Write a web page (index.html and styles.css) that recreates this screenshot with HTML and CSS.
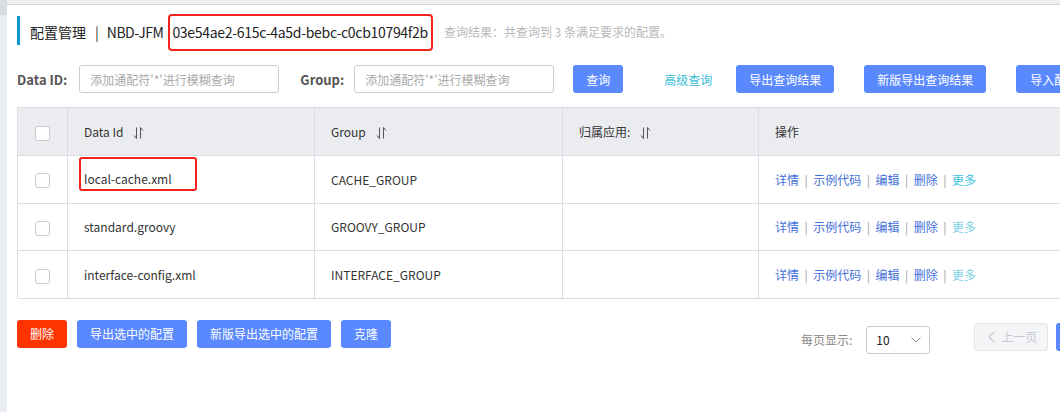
FILE: index.html
```html
<!DOCTYPE html>
<html lang="zh">
<head>
<meta charset="utf-8">
<title>配置管理</title>
<link rel="stylesheet" href="styles.css">
</head>
<body>
<div class="shell">
  <aside class="side"><div class="side-top"></div></aside>
  <div class="page">
    <div class="topline"></div>
    <main class="main">
      <div class="title-row">
        <div class="title-bar"></div>
        <span class="title">配置管理</span>
        <span class="sep">|</span>
        <span class="title latin">NBD-JFM</span>
        <span class="ns-box">03e54ae2-615c-4a5d-bebc-c0cb10794f2b</span>
        <span class="result">查询结果：共查询到 3 条满足要求的配置。</span>
      </div>

      <div class="search-row">
        <label class="lbl">Data ID:</label>
        <input class="inp" type="text" placeholder="添加通配符'*'进行模糊查询">
        <label class="lbl lbl-group">Group:</label>
        <input class="inp" type="text" placeholder="添加通配符'*'进行模糊查询">
        <button class="btn btn-query">查询</button>
        <a class="adv">高级查询</a>
        <button class="btn btn-export">导出查询结果</button>
        <button class="btn btn-export2">新版导出查询结果</button>
        <button class="btn btn-import">导入配置</button>
      </div>

      <table class="grid">
        <colgroup>
          <col class="c-chk"><col class="c-id"><col class="c-group"><col class="c-app"><col class="c-op">
        </colgroup>
        <thead>
          <tr>
            <th class="chk"><span class="cb"></span></th>
            <th>Data Id<svg class="sort" viewBox="0 0 11 12" width="11" height="12"><path d="M3.5 0.5V11.5L1 8.5M7.5 11.5V0.5L10 3.5" fill="none" stroke="#555" stroke-width="1"/></svg></th>
            <th>Group<svg class="sort" viewBox="0 0 11 12" width="11" height="12"><path d="M3.5 0.5V11.5L1 8.5M7.5 11.5V0.5L10 3.5" fill="none" stroke="#555" stroke-width="1"/></svg></th>
            <th>归属应用:<svg class="sort" viewBox="0 0 11 12" width="11" height="12"><path d="M3.5 0.5V11.5L1 8.5M7.5 11.5V0.5L10 3.5" fill="none" stroke="#555" stroke-width="1"/></svg></th>
            <th>操作</th>
          </tr>
        </thead>
        <tbody>
          <tr>
            <td class="chk"><span class="cb"></span></td>
            <td><span class="hl-box">local-cache.xml</span></td>
            <td>CACHE_GROUP</td>
            <td></td>
            <td class="ops"><a>详情</a><i>|</i><a>示例代码</a><i>|</i><a>编辑</a><i>|</i><a>删除</a><i>|</i><a class="more more-hot">更多</a></td>
          </tr>
          <tr>
            <td class="chk"><span class="cb"></span></td>
            <td>standard.groovy</td>
            <td>GROOVY_GROUP</td>
            <td></td>
            <td class="ops"><a>详情</a><i>|</i><a>示例代码</a><i>|</i><a>编辑</a><i>|</i><a>删除</a><i>|</i><a class="more">更多</a></td>
          </tr>
          <tr>
            <td class="chk"><span class="cb"></span></td>
            <td>interface-config.xml</td>
            <td>INTERFACE_GROUP</td>
            <td></td>
            <td class="ops"><a>详情</a><i>|</i><a>示例代码</a><i>|</i><a>编辑</a><i>|</i><a>删除</a><i>|</i><a class="more">更多</a></td>
          </tr>
        </tbody>
      </table>

      <div class="foot-row">
        <div class="foot-left">
          <button class="btn btn-danger">删除</button>
          <button class="btn btn-sel">导出选中的配置</button>
          <button class="btn btn-sel2">新版导出选中的配置</button>
          <button class="btn btn-clone">克隆</button>
        </div>
        <div class="pager">
          <span class="per">每页显示:</span>
          <div class="select"><span>10</span><svg viewBox="0 0 10 6" width="10" height="6"><path d="M0.5 0.5L5 5.2L9.5 0.5" fill="none" stroke="#888" stroke-width="1"/></svg></div>
          <button class="pbtn prev"><svg viewBox="0 0 7 12" width="7" height="12"><path d="M6.5 0.5L1 6L6.5 11.5" fill="none" stroke="#c8cbd2" stroke-width="1.2"/></svg>上一页</button>
          <button class="btn pnext">下一页</button>
        </div>
      </div>
    </main>
  </div>
</div>
</body>
</html>
```

FILE: styles.css
```css
html, body {
  margin: 0;
  padding: 0;
  background: #ffffff;
  overflow: hidden;
  width: 1060px;
  height: 412px;
}
body {
  font-family: "Noto Sans CJK SC", "Noto Sans", sans-serif;
  color: #333;
  font-size: 12px;
}
.shell {
  display: flex;
  width: 1300px;
  height: 412px;
}
.side {
  width: 7px;
  flex: none;
  background: #e9ecf1;
}
.side-top {
  height: 15px;
  background: #d8dce3;
}
.page {
  flex: 1;
  display: flex;
  flex-direction: column;
}
.topline {
  height: 4px;
  background: #efefef;
  border-bottom: 1px solid #d2d2d2;
}
.main {
  padding: 8px 0 0 10px;
}
.title-row {
  display: flex;
  align-items: center;
  height: 37px;
  font-size: 14px;
}
.title-bar {
  width: 3px;
  height: 29px;
  background: #0f97d3;
  margin-right: 10px;
  margin-top: -3px;
}
.title { color: #222; }
.latin { letter-spacing: -0.5px; }
.sep {
  margin: 0 8px 0 9px;
  color: #333;
}
.ns-box {
  margin-left: 5px;
  border: 2px solid #f2231c;
  border-radius: 4px;
  padding: 0 3px 0 2px;
  height: 33px;
  line-height: 33px;
  color: #222;
  margin-top: 2px;
  letter-spacing: -0.3px;
}
.result {
  margin-left: 11px;
  color: #b8b8b8;
  font-size: 12px;
}
.search-row {
  display: flex;
  align-items: center;
  height: 28px;
  margin-top: 15px;
}
.lbl {
  font-weight: bold;
  color: #555;
  font-size: 13px;
  margin-right: 12px;
}
.lbl-group { margin-left: 21px; margin-right: 10px; }
.inp {
  box-sizing: border-box;
  width: 200px;
  height: 28px;
  border: 1px solid #c9ccd2;
  border-radius: 3px;
  padding: 0 10px;
  font-family: inherit;
  font-size: 12px;
  outline: none;
}
.inp::placeholder { color: #aaaaaa; }
.btn {
  height: 28px;
  border: none;
  border-radius: 3px;
  background: #5a89ff;
  color: #fff;
  font-family: inherit;
  font-size: 12px;
  padding: 0;
  flex: none;
}
.btn-query { margin-left: 19px; width: 50px; }
.adv {
  margin-left: 41px;
  color: #39bdd6;
  font-size: 12px;
}
.btn-export { margin-left: 24px; width: 98px; }
.btn-export2 { margin-left: 30px; width: 122px; }
.btn-import { margin-left: 30px; padding: 0 14px; }

.grid {
  margin-top: 14px;
  border-collapse: collapse;
  table-layout: fixed;
  width: 1150px;
}
.c-chk { width: 50px; }
.c-id { width: 247px; }
.c-group { width: 248px; }
.c-app { width: 196px; }
.grid th, .grid td {
  border: 1px solid #dcdde2;
  text-align: left;
  padding: 0 0 0 16px;
  font-weight: normal;
  font-size: 12px;
  color: #333;
  white-space: nowrap;
}
.grid th {
  background: #ebecf0;
  height: 47px;
}
.grid td { height: 46.6px; }
.grid .chk { padding: 0; text-align: center; }
.cb {
  display: inline-block;
  width: 13px;
  height: 13px;
  border: 1px solid #c8cad0;
  border-radius: 3px;
  background: #fff;
  vertical-align: middle;
}
.sort {
  margin-left: 10px;
  vertical-align: -2px;
}
.hl-box {
  display: inline-block;
  margin: -14px 0 -3px -5px;
  border: 2px solid #f2231c;
  border-radius: 3px;
  width: 111px;
  height: 20px;
  line-height: 20px;
  padding: 10px 0 0 3px;
  box-sizing: content-box;
}
.ops a { color: #3f6fd8; }
.ops i {
  font-style: normal;
  color: #9aa0aa;
  margin: 0 5.5px;
}
.ops .more { color: #7fcfe3; }
.ops .more-hot { color: #3cc3de; }

.foot-row {
  display: flex;
  align-items: flex-start;
  margin-top: 21px;
}
.foot-left {
  display: flex;
  gap: 10px;
}
.btn-danger { background: #ff3300; width: 50px; }
.btn-sel { width: 110px; }
.btn-sel2 { width: 134px; }
.btn-clone { width: 50px; }
.pager {
  display: flex;
  align-items: center;
  margin-left: 410px;
}
.per {
  color: #888;
  font-size: 12px;
  margin-right: 14px;
  margin-top: 6px;
}
.select {
  box-sizing: border-box;
  width: 64px;
  height: 28px;
  margin-top: 6px;
  border: 1px solid #c8cad0;
  border-radius: 3px;
  display: flex;
  align-items: center;
  justify-content: space-between;
  padding: 0 8px 0 9px;
  color: #222;
}
.pbtn {
  box-sizing: border-box;
  margin-left: 44px;
  width: 74px;
  height: 28px;
  border: 1px solid #e3e5ea;
  border-radius: 3px;
  background: #f4f5f7;
  color: #c4c7ce;
  font-family: inherit;
  font-size: 12px;
  display: flex;
  align-items: center;
  padding: 0 0 0 13px;
  gap: 6px;
}
.pnext { margin-left: 8px; width: 74px; }
```
